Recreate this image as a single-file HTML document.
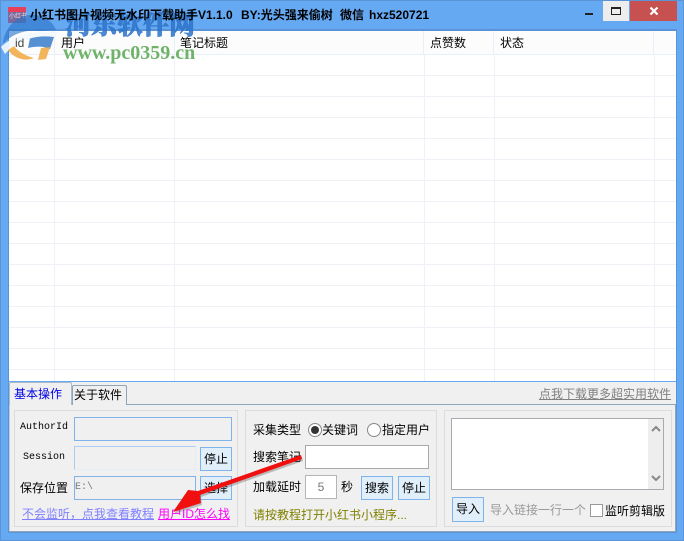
<!DOCTYPE html>
<html><head><meta charset="utf-8">
<style>
html,body{margin:0;padding:0;}
body{width:684px;height:541px;position:relative;overflow:hidden;background:#66a9f3;font-family:"Liberation Sans","WenQuanYi Zen Hei","Noto Sans CJK SC",sans-serif;font-size:12px;color:#000;}
.a{position:absolute;white-space:nowrap;line-height:14px;}
.b{position:absolute;box-sizing:border-box;}
.inp{position:absolute;box-sizing:border-box;border:1px solid #7eb4ea;background:#f0f0f0;}
.btn{position:absolute;box-sizing:border-box;border:1px solid #7eb4ea;background:#e1effb;text-align:center;font-size:12px;line-height:23px;}
.hc{position:absolute;top:31px;height:23px;width:1px;background:#e8eff8;}
.vl{position:absolute;top:54px;height:327px;width:1px;background:#eef1f5;}
.hl{position:absolute;left:9px;width:667px;height:1px;background:#eef1f5;}
.panel{position:absolute;box-sizing:border-box;border:1px solid #dcdcdc;}
.t{font-weight:bold;top:8px;}
</style></head><body>
<div class="b" style="left:0;top:0;width:684px;height:541px;border:1px solid #5b94d6;"></div>
<div class="b" style="left:603px;top:1px;width:26px;height:20px;background:#ededed;"></div>
<div class="b" style="left:611px;top:7px;width:10px;height:8px;border:1px solid #222;border-top-width:2px;"></div>
<div class="b" style="left:630px;top:1px;width:47px;height:20px;background:#c75050;"></div>
<svg class="b" style="left:649px;top:6px;" width="10" height="10" viewBox="0 0 10 10"><path d="M1.500 1.500L8.500 8.500M8.500 1.500L1.500 8.500" stroke="#fff" stroke-width="2.200"/></svg>
<div class="b" style="left:585px;top:13px;width:8px;height:2px;background:#222;"></div>
<div class="b" style="left:8px;top:29px;width:669px;height:504px;background:#f0f0f0;border:1px solid #5b94d6;border-top-width:2px;"></div>
<div class="b" style="left:9px;top:31px;width:667px;height:350px;background:#fff;"></div>
<div class="b" style="left:9px;top:31px;width:667px;height:24px;background:#fcfcfc;border-bottom:1px solid #e8eff8;"></div>
<div class="hc" style="left:54px"></div><div class="hc" style="left:174px"></div><div class="hc" style="left:423px"></div><div class="hc" style="left:493px"></div><div class="hc" style="left:653px"></div>
<div class="vl" style="left:54px"></div><div class="vl" style="left:174px"></div><div class="vl" style="left:424px"></div><div class="vl" style="left:494px"></div><div class="vl" style="left:654px"></div>
<div class="hl" style="top:75px"></div><div class="hl" style="top:96px"></div><div class="hl" style="top:117px"></div><div class="hl" style="top:138px"></div><div class="hl" style="top:159px"></div><div class="hl" style="top:180px"></div><div class="hl" style="top:201px"></div><div class="hl" style="top:222px"></div><div class="hl" style="top:243px"></div><div class="hl" style="top:264px"></div><div class="hl" style="top:285px"></div><div class="hl" style="top:306px"></div><div class="hl" style="top:327px"></div><div class="hl" style="top:348px"></div><div class="hl" style="top:369px"></div>

<div class="b" style="left:8px;top:7px;width:18px;height:6px;background:#e8405a;"></div>
<div class="b" style="left:8px;top:12px;width:18px;height:11px;background:#7a6a9c;"></div>
<div class="a" style="left:9px;top:12px;font-size:6px;line-height:10px;color:#f4d8e0;">小红书</div>

<svg class="b" style="left:0;top:0;" width="70" height="70" viewBox="0 0 70 70">
<path d="M3 44C4 26 20 13 35 15C45 16 53 22 56 30L40 31C25 29 12 34 3 44Z" fill="#2a74c8" opacity=".62"/>
<path d="M30 38C38 36 46 36 54 37L50 49C44 46 36 46 28 48Z" fill="#2a74c8" opacity=".8"/>
<path d="M1 47C12 36 30 31 57 32L57 36C34 35 18 40 5 54Z" fill="#f2f8fd" opacity=".92"/>
<path d="M8 50C14 58 24 62 34 58C26 56 18 52 14 46Z" fill="#f0a840" opacity=".85"/>
<path d="M41 48L50 47L46 59L38 60Z" fill="#f0a840" opacity=".85"/>
</svg>
<div class="a" style="left:65px;top:11px;font-family:'Liberation Serif','Noto Serif CJK SC',serif;font-size:26px;line-height:30px;font-weight:900;-webkit-text-stroke:.6px rgba(45,115,200,.85);color:rgba(45,115,200,.85);">河东软件网</div>
<div class="a" style="left:63px;top:43px;font-family:'Liberation Serif',serif;font-size:20px;line-height:20px;font-weight:bold;color:#6fb36a;">www.pc0359.cn</div>

<div class="a t" style="left:30px;">小红书图片视频无水印下载助手V1.1.0</div>
<div class="a t" style="left:241px;">BY:光头强来偷树</div>
<div class="a t" style="left:340px;">微信</div>
<div class="a t" style="left:369px;">hxz520721</div>

<div class="a" style="left:15px;top:36px;color:#444;">id</div>
<div class="a" style="left:61px;top:36px;">用户</div>
<div class="a" style="left:180px;top:36px;">笔记标题</div>
<div class="a" style="left:430px;top:36px;">点赞数</div>
<div class="a" style="left:500px;top:36px;">状态</div>
<div class="b" style="left:9px;top:381px;width:667px;height:1px;background:#66a9f3;"></div>
<div class="b" style="left:9px;top:404px;width:667px;height:1px;background:#8fa5b8;"></div>
<div class="b" style="left:9px;top:404px;width:1px;height:128px;background:#c4ced6;"></div>
<div class="b" style="left:675px;top:404px;width:1px;height:128px;background:#8fa5b8;"></div>
<div class="b" style="left:9px;top:531px;width:667px;height:1px;background:#8fa5b8;"></div>
<div class="b" style="left:9px;top:382px;width:63px;height:23px;background:#f0f0f0;border:1px solid #a9bccb;border-bottom:none;border-radius:2px 2px 0 0;"></div>
<div class="b" style="left:72px;top:385px;width:55px;height:20px;background:#f0f0f0;border:1px solid #8fa5b8;border-bottom:none;border-radius:2px 2px 0 0;"></div>
<div class="a" style="left:14px;top:387px;color:#0000e6;">基本操作</div>
<div class="a" style="left:74px;top:388px;">关于软件</div>
<div class="a" style="left:539px;top:387px;color:#808080;text-decoration:underline;">点我下载更多超实用软件</div>

<div class="panel" style="left:14px;top:410px;width:224px;height:117px;"></div>
<div class="a" style="left:20px;top:421px;font-family:'Liberation Mono',monospace;font-size:10px;">AuthorId</div>
<div class="inp" style="left:74px;top:417px;width:158px;height:24px;"></div>
<div class="a" style="left:23px;top:451px;font-family:'Liberation Mono',monospace;font-size:10px;">Session</div>
<div class="inp" style="left:74px;top:446px;width:122px;height:24px;border-color:#a8cdf0 #e4edf5 #e4edf5 #a8cdf0;"></div>
<div class="btn" style="left:200px;top:447px;width:32px;height:24px;">停止</div>
<div class="a" style="left:20px;top:481px;">保存位置</div>
<div class="inp" style="left:74px;top:476px;width:122px;height:24px;"></div>
<div class="a" style="left:75px;top:481px;font-family:'Liberation Mono',monospace;font-size:10px;color:#777;">E:\</div>
<div class="btn" style="left:200px;top:476px;width:32px;height:24px;">选择</div>
<div class="a" style="left:22px;top:507px;color:#8080ff;text-decoration:underline;">不会监听，点我查看教程</div>
<div class="a" style="left:158px;top:507px;color:#ff00ff;text-decoration:underline;">用户ID怎么找</div>

<div class="panel" style="left:245px;top:410px;width:192px;height:117px;"></div>
<div class="a" style="left:253px;top:423px;">采集类型</div>
<div class="b" style="left:308px;top:423px;width:14px;height:14px;border:1px solid #888;border-radius:50%;background:#fff;"></div>
<div class="b" style="left:311px;top:426px;width:8px;height:8px;border-radius:50%;background:#333;"></div>
<div class="a" style="left:322px;top:423px;">关键词</div>
<div class="b" style="left:367px;top:423px;width:14px;height:14px;border:1px solid #888;border-radius:50%;background:#fff;"></div>
<div class="a" style="left:382px;top:423px;">指定用户</div>
<div class="a" style="left:253px;top:450px;">搜索笔记</div>
<div class="b" style="left:305px;top:445px;width:124px;height:24px;border:1px solid #a9a9a9;background:#fff;"></div>
<div class="a" style="left:253px;top:480px;">加载延时</div>
<div class="b" style="left:305px;top:475px;width:32px;height:24px;border:1px solid #b5b5b5;background:#fff;text-align:center;line-height:22px;color:#777;">5</div>
<div class="a" style="left:341px;top:480px;">秒</div>
<div class="btn" style="left:361px;top:476px;width:32px;height:24px;">搜索</div>
<div class="btn" style="left:398px;top:476px;width:32px;height:24px;">停止</div>
<div class="a" style="left:253px;top:508px;color:#808000;">请按教程打开小红书小程序...</div>

<div class="panel" style="left:444px;top:410px;width:228px;height:117px;"></div>
<div class="b" style="left:451px;top:418px;width:213px;height:72px;border:1px solid #a9a9b0;background:#fff;"></div>
<div class="b" style="left:648px;top:419px;width:15px;height:70px;background:#eee;"></div>
<svg class="b" style="left:650px;top:424px;" width="12" height="60" viewBox="0 0 12 60"><path d="M2 7L6 3L10 7M2 52L6 56L10 52" fill="none" stroke="#888" stroke-width="2"/></svg>
<div class="btn" style="left:452px;top:497px;width:32px;height:25px;line-height:23px;">导入</div>
<div class="a" style="left:490px;top:503px;color:#999;">导入链接一行一个</div>
<div class="b" style="left:590px;top:504px;width:13px;height:13px;border:1px solid #999;background:#fff;"></div>
<div class="a" style="left:605px;top:504px;">监听剪辑版</div>

<svg class="b" style="left:0;top:0;" width="684" height="541" viewBox="0 0 684 541">
<path d="M301 455L198 491L188 490L173 512L201 503L200 495L302 459Z" fill="#555" opacity=".35" transform="translate(1 2)"/>
<path d="M301 455L198 491L188 490L173 512L201 503L200 495L302 459Z" fill="#f01010"/>
</svg>
</body></html>
